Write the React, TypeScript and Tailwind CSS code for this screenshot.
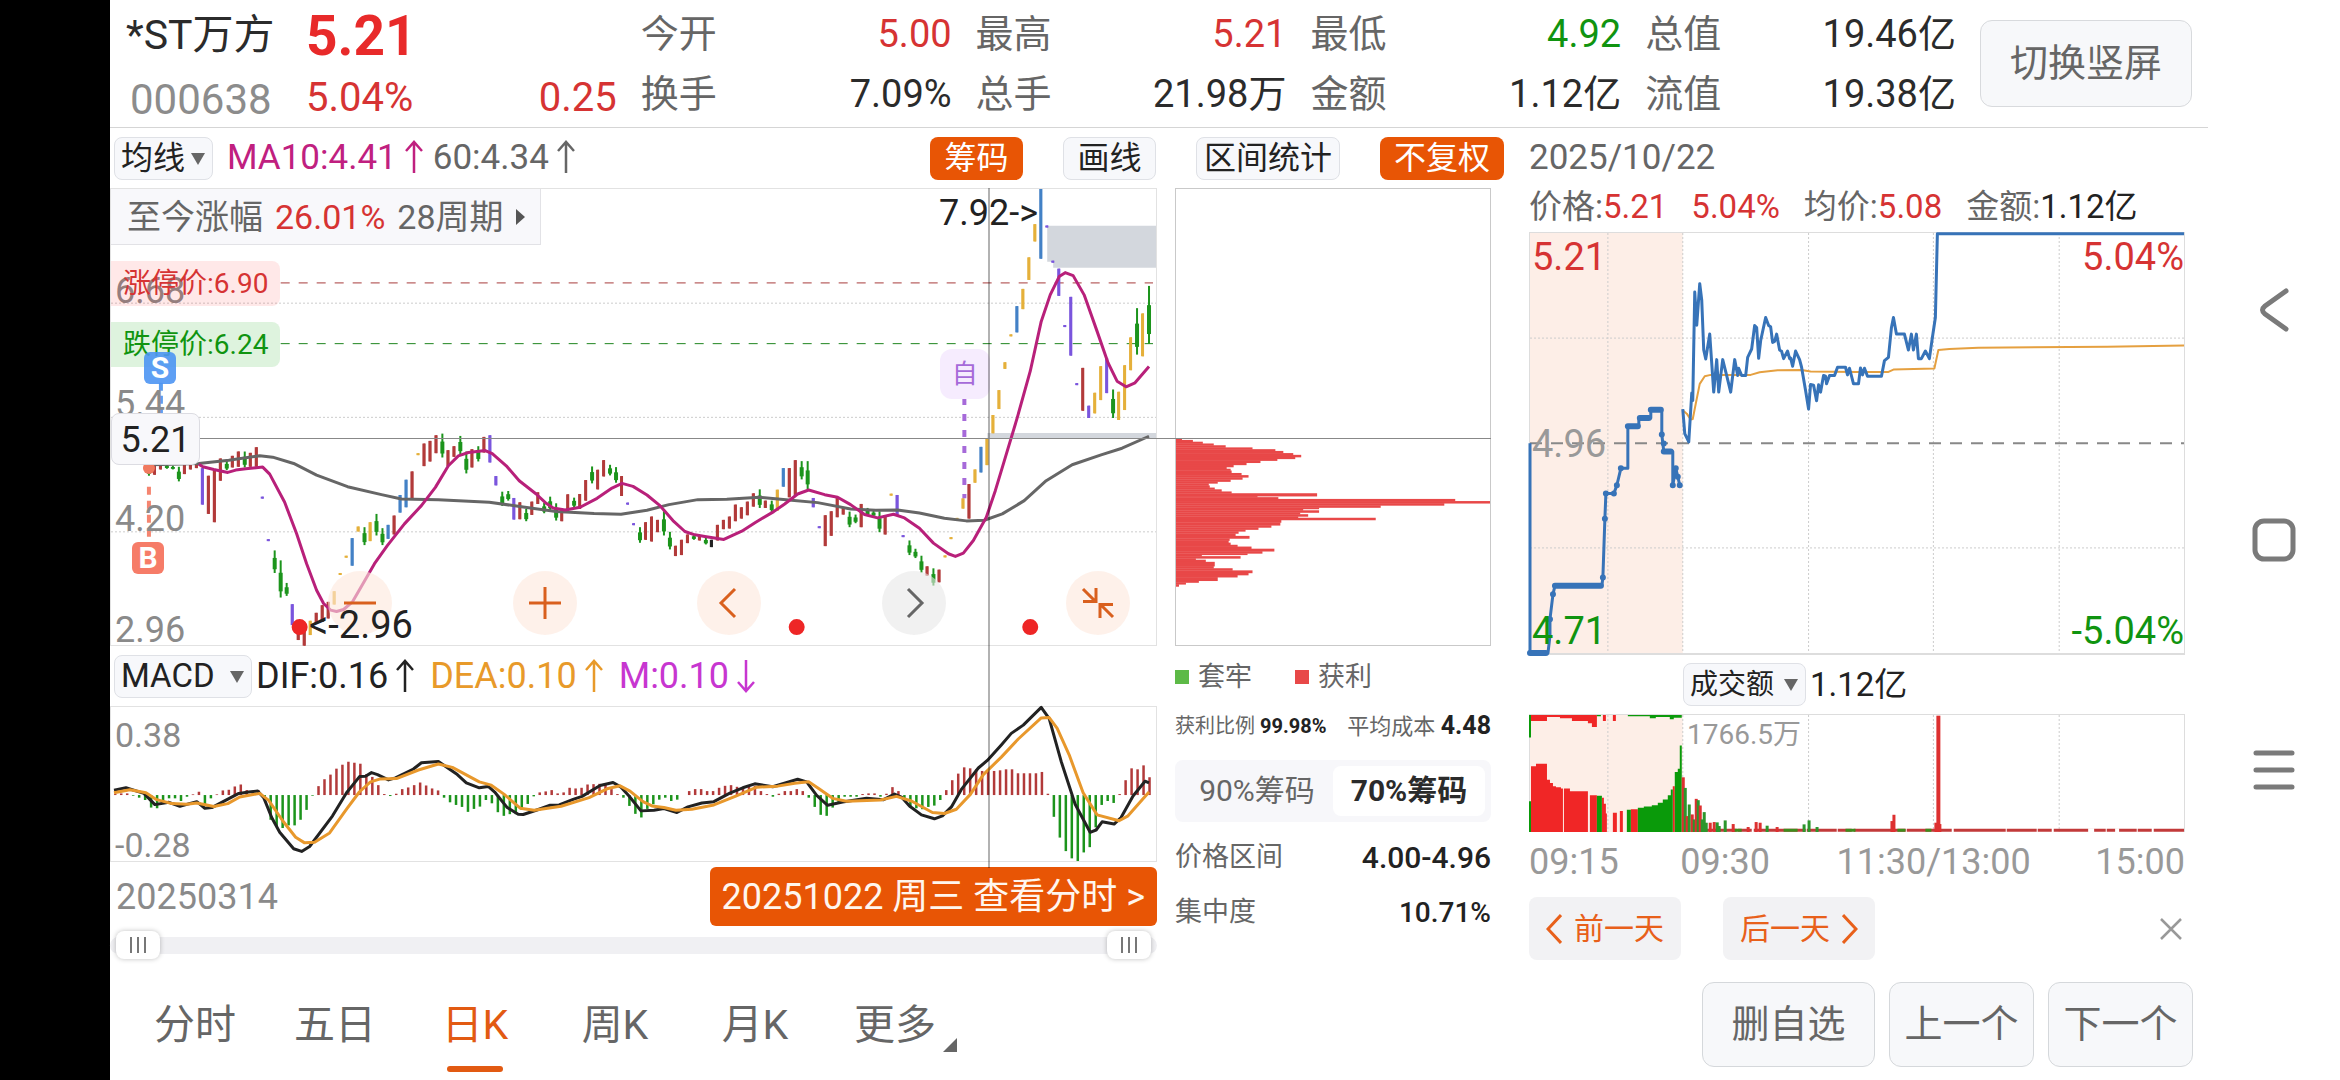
import type { ReactNode } from 'react'

// candle: [high, low, colour], one every 6px
type Candle = [number, number, string]

const R = '#b23a3a'
const G = '#1c941c'
const P = '#7a55dd'
const Y = '#e5b03a'
const B = '#4381c6'
const K = '#222222'

const candles: Candle[] = [
    [850, 885, G], [850, 882, R], [848, 866, R], [850, 864, G], [855, 866, G], [858, 902, G], [850, 880, R], [850, 866, R],
    [848, 862, R], [862, 972, P], [885, 1000, R], [870, 1025, R], [833, 900, R], [840, 868, G], [825, 860, R], [812, 858, R],
    [812, 860, G], [816, 858, R], [799, 858, R], [948, 954, P], [1076, 1082, P], [1110, 1178, G], [1140, 1252, G], [1208, 1247, G],
    [1272, 1335, P], [1320, 1380, R], [1340, 1397, R], [1322, 1365, Y], [1298, 1330, R], [1275, 1325, R], [1265, 1315, R], [1233, 1273, Y],
    [1178, 1184, Y], [1126, 1132, Y], [1073, 1156, B], [1038, 1053, Y], [1040, 1094, G], [1025, 1082, Y], [1000, 1065, G], [1043, 1094, G],
    [1033, 1075, B], [1005, 1062, R], [943, 996, B], [897, 980, B], [872, 954, R], [817, 823, Y], [788, 856, R], [780, 842, R],
    [763, 817, R], [758, 830, G], [808, 856, R], [796, 828, R], [765, 820, G], [812, 878, G], [805, 860, R], [796, 842, G],
    [768, 815, R], [763, 845, P], [886, 914, P], [933, 976, G], [931, 960, G], [952, 1017, P], [965, 1016, R], [985, 1022, G],
    [963, 1003, R], [935, 970, R], [967, 998, G], [948, 990, G], [968, 1020, G], [985, 1022, R], [941, 990, R], [951, 980, G],
    [940, 985, R], [898, 960, R], [857, 908, G], [867, 926, R], [838, 887, R], [852, 884, G], [859, 906, G], [886, 946, R],
    [966, 972, P], [1028, 1034, P], [1040, 1087, G], [1025, 1078, R], [1008, 1083, R], [1018, 1055, R], [992, 1065, G], [1054, 1107, G],
    [1096, 1127, R], [1078, 1124, R], [1062, 1088, R], [1062, 1078, G], [1065, 1080, R], [1072, 1092, G], [1078, 1100, K], [1033, 1080, R],
    [1018, 1046, R], [1008, 1044, R], [972, 1022, R], [980, 1014, R], [963, 1004, R], [938, 978, R], [926, 982, G], [960, 982, R],
    [960, 994, G], [927, 990, Y], [862, 918, B], [862, 950, R], [838, 945, R], [841, 896, G], [841, 925, G], [952, 980, P],
    [1037, 1043, P], [1004, 1097, R], [992, 1066, R], [952, 1010, R], [980, 1002, R], [993, 1040, G], [1002, 1028, G], [970, 1040, R],
    [982, 1005, G], [990, 1008, G], [992, 1055, G], [1008, 1062, R], [939, 945, Y], [943, 1003, P], [1064, 1070, P], [1080, 1124, G],
    [1105, 1133, G], [1126, 1177, G], [1158, 1186, R], [1164, 1216, G], [1168, 1206, R], [1125, 1131, Y], [1070, 1076, Y], [1012, 1018, Y],
    [953, 984, Y], [910, 1014, R], [866, 906, Y], [798, 875, B], [773, 853, Y], [702, 757, Y], [627, 684, Y], [543, 563, Y],
    [459, 465, Y], [374, 453, B], [322, 383, Y], [227, 295, Y], [127, 179, Y], [21, 231, B], [131, 137, P], [237, 243, P],
    [261, 343, P], [431, 437, P], [346, 523, P], [606, 612, P], [560, 689, R], [674, 711, P], [635, 697, Y], [555, 657, Y],
    [530, 636, P], [625, 711, G], [632, 717, Y], [552, 687, Y], [468, 567, Y], [380, 520, G], [396, 525, Y], [313, 487, G],
]

const ma10 =
    '88,850 92,858 103,866 117,875 125,868 135,864 152,859 159,880 174,965 186,1060 196,1150 206,1230 213,1270 220,1290 226,1294 233,1288 242,1265 264,1150 277,1095 294,1030 311,975 325,920 338,855 348,825 358,815 375,809 382,818 396,855 409,900 426,940 436,968 443,982 455,988 470,980 487,953 502,922 512,908 523,917 537,943 550,975 563,1020 575,1053 585,1063 595,1068 614,1077 632,1052 646,1025 664,993 675,970 688,940 699,928 715,942 728,950 741,972 755,1002 768,1012 784,1001 795,1012 810,1043 824,1088 839,1120 846,1128 854,1118 864,1080 877,1010 886,930 895,840 908,710 921,570 932,420 941,340 950,285 956,273 964,282 975,340 988,450 999,545 1008,600 1017,617 1026,605 1040,556'

const ma60 =
    '40,852 88,848 118,838 149,825 162,829 183,848 206,883 237,918 271,942 291,955 328,957 379,965 413,979 446,993 484,999 511,1001 519,997 537,989 559,972 588,957 617,956 650,950 679,958 708,966 741,985 766,989 788,988 810,997 835,1013 857,1021 875,1019 893,1000 915,960 937,900 963,852 992,822 1013,802 1040,766'

const macdBars = [
    3, 5, 5, -2, -8, -15, -38, -40, -25, -10, -10, -18, -5, 2, 10, -32, -10, 2, 14, 16, 26, 32, 15, 13, 14, -15, -75, -95, -100, -92,
    -92, -75, -45, -2, 27, 48, 62, 80, 92, 101, 98, 95, 63, 55, 30, 3, -3, 4, 18, 23, 30, 38, 29, 20, 14, -8, -22, -30, -36, -51,
    -42, -35, -15, -25, -52, -63, -58, -58, -45, -27, -4, 8, 11, 15, 5, 8, 22, 20, 22, 32, 33, 34, 34, 18, 3, -8, -33, -57, -68, -42,
    -28, -14, -8, -18, -14, 0, 12, 18, 18, 12, 12, 22, 28, 30, 25, 22, 25, 28, 12, 3, -5, 4, 12, 12, 18, 12, -8, -36, -60, -63,
    -38, -22, -5, -5, -5, 3, 5, 5, -5, 4, 24, 12, -15, -38, -40, -43, -36, -32, -15, 15, 45, 65, 84, 81, 78, 73, 73, 73, 75, 78,
    78, 66, 66, 66, 66, 70, 4, -66, -129, -170, -192, -200, -174, -158, -98, -30, -18, -24, 3, 45, 81, 78, 90, 54,
]

const dif =
    '3,447 15,440 33,457 44,491 58,484 69,496 86,482 94,502 101,500 128,457 138,453 147,450 153,470 161,530 169,575 183,625 191,633 199,618 222,525 236,455 249,406 255,405 261,394 267,400 278,416 285,410 303,383 311,364 328,360 347,400 356,425 369,440 378,436 385,455 397,500 408,520 413,521 426,508 440,493 449,492 463,475 472,466 490,433 503,424 511,438 519,465 531,510 544,508 554,503 567,515 578,498 592,486 604,482 620,456 633,440 645,428 663,437 688,414 697,422 707,463 718,493 733,483 757,472 774,476 785,459 792,468 800,495 812,522 825,534 833,525 842,498 852,445 869,380 878,357 892,310 902,275 914,250 932,196 940,230 952,360 966,490 981,575 987,568 993,543 1005,550 1012,530 1024,465 1036,420 1040,425'

const dea =
    '3,455 19,446 35,455 45,475 61,488 76,490 86,486 103,497 117,488 129,468 149,457 158,478 172,540 185,590 194,607 204,605 219,577 236,505 249,452 260,422 270,413 286,412 308,386 328,368 342,378 369,422 381,432 394,460 410,502 424,508 451,496 479,470 497,443 510,434 520,450 533,482 542,495 554,500 566,508 582,505 604,492 626,465 647,438 668,435 685,426 699,422 709,442 723,472 737,481 771,477 787,466 802,480 823,515 835,518 847,505 861,460 874,400 892,347 909,292 932,228 940,227 948,260 960,340 974,455 988,522 1010,540 1019,525 1040,453'

// chip rows: [top, width]
const chips: [number, number][] = [
    [106, 6], [110, 17], [115, 27], [120, 38], [125, 50], [131, 77], [136, 100], [141, 108], [147, 118], [152, 126], [158, 120], [163, 102],
    [168, 85], [174, 71], [180, 58], [186, 51], [191, 55], [196, 56], [203, 66], [209, 73], [215, 67], [221, 55], [227, 42], [232, 33],
    [238, 34], [244, 39], [249, 46], [255, 56], [260, 142], [268, 82], [271, 103], [276, 281], [282, 316], [288, 270], [294, 206], [300, 144],
    [304, 128], [308, 144], [314, 125], [319, 133], [325, 123], [329, 201], [335, 106], [342, 105], [350, 96], [356, 83], [362, 70], [367, 63],
    [373, 60], [380, 74], [387, 54], [393, 53], [399, 55], [405, 62], [410, 76], [416, 99], [423, 87], [429, 72], [433, 26], [437, 65],
    [443, 20], [447, 30], [453, 39], [465, 38], [471, 57], [477, 77], [484, 73], [490, 62], [496, 42], [506, 23], [511, 10], [516, 3], [522, 0],
]

const auction =
    '0,669 0,1302 18,1302 20,1250 20,1200 23,1125 25,1099 72,1099 73,1074 75,897 76,821 84,821 87,796 91,745 98,745 98,618 109,618 109,593 121,593 121,568 132,568 132,643 134,694 143,694 143,796 146,745 148,770 150,796'

const price =
    '153,566 155,640 159,665 162,518 163,540 165,213 167,313 170,188 172,238 174,388 176,415 180,340 184,515 187,417 189,515 193,417 197,465 201,515 205,417 208,465 209,443 212,465 216,465 218,410 222,385 225,314 227,320 229,413 231,360 236,290 239,314 241,318 243,365 245,362 247,340 250,388 252,392 254,414 258,391 260,414 261,412 263,437 266,391 270,417 272,440 276,510 279,566 281,492 284,494 287,541 289,493 291,515 294,465 296,467 297,490 300,465 305,465 308,440 316,440 318,463 320,443 324,490 329,490 331,442 333,463 335,443 338,467 352,467 355,420 359,410 362,320 364,290 367,340 375,340 379,388 382,340 384,388 387,340 389,414 392,414 396,391 400,414 403,350 406,290 408,37 655,37'

const average =
    '153,570 157,580 161,598 163,596 166,550 170,490 175,467 181,463 221,463 230,455 248,449 272,448 281,453 328,454 359,454 364,447 405,444 409,388 420,385 449,381 578,378 655,374'

// volume bars after the open: [x, top, red?]
const volumes: [number, number, boolean][] = [
    [153, 378, true], [155, 410, false], [157, 495, true], [159, 460, false], [162, 490, true], [164, 505, false], [166, 443, true],
    [168, 447, false], [170, 463, true], [172, 505, false], [174, 483, false], [176, 515, false], [180, 515, true], [184, 513, true],
    [187, 514, false], [189, 525, false], [195, 508, false], [203, 519, true], [218, 528, true], [226, 513, true], [230, 515, true],
    [237, 524, false], [247, 528, true], [274, 520, false], [279, 508, false], [287, 528, false], [362, 510, true], [364, 491, true],
    [406, 515, true], [408, 192, true], [410, 519, true],
]

const quotes = [
    { label: '今开', value: '5.00', color: 'text-[#d63333]', label2: '换手', value2: '7.09%' },
    { label: '最高', value: '5.21', color: 'text-[#d63333]', label2: '总手', value2: '21.98万' },
    { label: '最低', value: '4.92', color: 'text-[#109410]', label2: '金额', value2: '1.12亿' },
    { label: '总值', value: '19.46亿', color: 'text-[#2b2b2b]', label2: '流值', value2: '19.38亿' },
]

const tabs = ['分时', '五日', '日K', '周K', '月K']

function Plot({ box, children }: { box: string; children: ReactNode }) {
    return (
        <svg viewBox={box} preserveAspectRatio="none" className="block w-full h-full overflow-visible" aria-hidden="true">
            {children}
        </svg>
    )
}

function Line({ points, color, width = 2 }: { points: string; color: string; width?: number }) {
    return <polyline points={points} fill="none" stroke={color} strokeWidth={width} strokeLinejoin="round" vectorEffect="non-scaling-stroke" />
}

function Grid({ d }: { d: string }) {
    return <path d={d} fill="none" stroke="#cccccc" strokeWidth={1} strokeDasharray="2 2" vectorEffect="non-scaling-stroke" />
}

function Arrow({ down }: { down?: boolean }) {
    return (
        <svg viewBox="0 0 18 34" className="inline-block w-[18px] h-[34px] ml-2 align-[-5px]" fill="none" stroke="currentColor" strokeWidth="2.500" role="img" aria-label={down ? '↓' : '↑'}>
            {down ? <path d="M9 1v31M1 23l8 9 8-9" /> : <path d="M9 33V2M1 11l8-9 8 9" />}
        </svg>
    )
}

function Picker({ label, options, className }: { label: string; options: string[]; className: string }) {
    return (
        <div className="relative">
            <select aria-label={label} className={`${className} block h-[43px] appearance-none rounded-lg border border-[#dfe1e6] bg-[#f7f8fb] pl-1.5 leading-[40px] text-[#222]`}>
                {options.map((o) => <option key={o}>{o}</option>)}
            </select>
            <svg viewBox="0 0 14 12" className="absolute right-2 top-4 w-3.5 h-3 pointer-events-none"><path d="M0 0h14l-7 12z" fill="#666" /></svg>
        </div>
    )
}

function RoundButton({ label, children, gray }: { label: string; children: ReactNode; gray?: boolean }) {
    return (
        <button aria-label={label} className={`flex items-center justify-center w-16 h-16 rounded-full ${gray ? 'bg-[#e8e8e8]/60 text-[#666]' : 'bg-[#fee8dc]/60 text-[#d9601e]'}`}>
            <svg viewBox="0 0 40 40" className="w-10 h-10" fill="none" stroke="currentColor" strokeWidth="3">{children}</svg>
        </button>
    )
}

function Header() {
    return (
        <header className="flex items-center h-32 pl-4 pr-4 border-b border-[#d5d5d5]">
            <div className="w-[180px] shrink-0">
                <p className="h-[60px] text-[41px] leading-[62px] text-[#2b2b2b] whitespace-nowrap">*ST万方</p>
                <p className="h-[60px] pl-1 text-[42px] leading-[72px] text-[#8c8c8c]">000638</p>
            </div>
            <div className="grid flex-1 grid-cols-5 gap-6">
                <div>
                    <p className="h-[60px] text-[55px] leading-[64px] font-bold text-[#e82a2a]">5.21</p>
                    <p className="flex justify-between h-[60px] text-[40px] leading-[68px] text-[#d63333]"><span>5.04%</span><span>0.25</span></p>
                </div>
                {quotes.map((q) => (
                    <dl key={q.label} className="grid grid-cols-[auto_1fr] text-[38px] leading-[60px]">
                        <dt className="text-[#666]">{q.label}</dt>
                        <dd className={`text-right ${q.color}`}>{q.value}</dd>
                        <dt className="text-[#666]">{q.label2}</dt>
                        <dd className="text-right text-[#2b2b2b]">{q.value2}</dd>
                    </dl>
                ))}
            </div>
            <button className="ml-6 w-[212px] h-[87px] rounded-xl border border-[#d8dadd] bg-[#f7f8fa] text-[38px] text-[#666]">切换竖屏</button>
        </header>
    )
}

function Toolbar() {
    return (
        <div className="flex items-center h-[60px] pl-1 text-[32px]">
            <Picker label="均线" options={['均线']} className="w-[99px]" />
            <p className="ml-3.5 text-[35px] whitespace-nowrap text-[#c0207f]">MA10:4.41<Arrow /></p>
            <p className="ml-2.5 text-[35px] whitespace-nowrap text-[#666]">60:4.34<Arrow /></p>
            <div className="flex gap-10 ml-auto">
                <button className="w-[93px] h-[43px] rounded-lg bg-[#e85505] text-white leading-none">筹码</button>
                <button className="w-[93px] h-[43px] rounded-lg border border-[#dfe1e6] bg-[#f7f8fb] text-[#222] leading-none">画线</button>
                <button className="w-[144px] h-[43px] rounded-lg border border-[#dfe1e6] bg-[#f7f8fb] text-[#222] leading-none">区间统计</button>
                <button className="w-[124px] h-[43px] rounded-lg bg-[#e85505] text-white leading-none">不复权</button>
            </div>
        </div>
    )
}

function CandleChart() {
    return (
        <div className="relative h-[458px] border border-[#e2e2e2]">
            <div className="absolute left-1 top-[82px] text-[36px] leading-10 text-[#8a8a8a]">6.68</div>
            <div className="absolute left-1 top-[195px] text-[36px] leading-10 text-[#8a8a8a]">5.44</div>
            <div className="absolute left-1 top-[310px] text-[36px] leading-10 text-[#8a8a8a]">4.20</div>
            <div className="absolute left-1 top-[421px] text-[36px] leading-10 text-[#8a8a8a]">2.96</div>
            <Plot box="0 21 1047 1374">
                <Grid d="M0 365H1047M0 709H1047M0 1054H1047" />
                <path d="M938 132H1047V258H944V240H938zM878 756H1047V772H878z" fill="#d3d7dd" />
                <path d="M170 304H1044" stroke="#a83c3c" strokeWidth={1} strokeDasharray="9 9" vectorEffect="non-scaling-stroke" />
                <path d="M170 487H1044" stroke="#1f851f" strokeWidth={1} strokeDasharray="9 9" vectorEffect="non-scaling-stroke" />
                {candles.map(([hi, lo, color], i) => (
                    <g key={i} fill={color}>
                        <rect x={37 + i * 6} y={hi} width={2} height={lo - hi} />
                        <rect x={36 + i * 6} y={color === G ? hi + (lo - hi) / 3 : hi} width={color === G ? 4 : 3} height={color === G ? (lo - hi) / 2 : lo - hi} />
                    </g>
                ))}
                <Line points={ma60} color="#666666" width={3} />
                <Line points={ma10} color="#b8207a" width={3} />
                <path d="M50 605V697" stroke="#5a9df0" strokeWidth={4} strokeDasharray="8 5" vectorEffect="non-scaling-stroke" />
                <path d="M38 918V1080" stroke="#f58570" strokeWidth={4} strokeDasharray="8 6" vectorEffect="non-scaling-stroke" />
                <path d="M38 862h0" stroke="#f07a60" strokeWidth={12} strokeLinecap="round" vectorEffect="non-scaling-stroke" />
                <path d="M855 651V953" stroke="#a66ad9" strokeWidth={4} strokeDasharray="7 9" vectorEffect="non-scaling-stroke" />
                <path d="M189 1341h0M687 1341h0M921 1341h0" stroke="#ee2626" strokeWidth={16} strokeLinecap="round" vectorEffect="non-scaling-stroke" />
            </Plot>

            <button className="absolute left-0 top-0 flex items-center gap-3 w-[430px] h-14 pl-4 border-r border-b border-[#e2e2e6] bg-[#f8f8fb] text-[34px] leading-none whitespace-nowrap text-[#666]">
                <span>至今涨幅</span>
                <span className="text-[#d63333]">26.01%</span>
                <span>28周期</span>
                <svg viewBox="0 0 9 16" className="w-[9px] h-4"><path d="M0 0l9 8-9 8z" fill="#555" /></svg>
            </button>
            <div className="absolute left-0 top-[72px] h-[45px] px-3 rounded-r-lg bg-[#ff2020]/10 text-[28px] leading-[45px] text-[#d63333]">涨停价:6.90</div>
            <div className="absolute left-0 top-[133px] h-[45px] px-3 rounded-r-lg bg-[#20b020]/15 text-[28px] leading-[45px] text-[#109410]">跌停价:6.24</div>
            <div className="absolute left-[33px] top-[163px] w-8 h-8 rounded-md bg-[#4c95f3]/90 text-center text-[30px] leading-8 font-bold text-white">S</div>
            <div className="absolute left-[21px] top-[353px] w-8 h-8 rounded-md bg-[#f67c68] text-center text-[30px] leading-8 font-bold text-white">B</div>
            <div className="absolute left-0 top-[224px] z-10 w-[89px] h-[52px] rounded-lg border border-[#dcdce2] bg-[#f8f8fb] text-center text-[36px] leading-[52px] text-[#222]">5.21</div>
            <div className="absolute left-[79.300%] top-[160px] w-[50px] h-[50px] rounded-xl bg-[#f6ecfe] text-center text-[26px] leading-[50px] text-[#a66ad9]">自</div>
            <div className="absolute right-[118px] top-1 text-[36px] leading-10 text-[#222]">7.92-&gt;</div>

            <div className="absolute left-[217px] right-[26px] bottom-2.5 flex justify-between">
                <RoundButton label="缩小"><path d="M4 20h32" /></RoundButton>
                <RoundButton label="放大"><path d="M4 20h32M20 4v32" /></RoundButton>
                <RoundButton label="左移"><path d="M26 6L12 20l14 14" /></RoundButton>
                <RoundButton label="右移" gray><path d="M14 6l14 14-14 14" /></RoundButton>
                <RoundButton label="收起"><path d="M5 6l12 12M5 18.500h13V5M35 34L23 22M35 21.500H22V35" /></RoundButton>
            </div>
            <div className="absolute left-[198px] top-[416px] text-[38px] leading-10 text-[#222] pointer-events-none">&lt;-2.96</div>
        </div>
    )
}

function MacdChart() {
    return (
        <>
            <div className="flex items-center h-[60px] pl-1 text-[36px] whitespace-nowrap">
                <Picker label="指标" options={['MACD']} className="w-[138px] text-[33px]" />
                <span className="ml-1 text-[#222]">DIF:0.16<Arrow /></span>
                <span className="ml-4 text-[#e89a2a]">DEA:0.10<Arrow /></span>
                <span className="ml-4 text-[#c736d0]">M:0.10<Arrow down /></span>
            </div>
            <div className="relative h-[156px] border border-[#e2e2e2]">
                <Plot box="0 195 1047 467">
                    {macdBars.map((v, i) => (
                        <rect key={i} x={3 + i * 5.99} y={v > 0 ? 462 - v : 462} width={2.5} height={Math.abs(v)} fill={v > 0 ? '#b23a3a' : '#1c941c'} />
                    ))}
                    <Line points={dif} color="#222222" width={3} />
                    <Line points={dea} color="#e8982c" width={3} />
                </Plot>
                <div className="absolute left-1 top-2 text-[34px] leading-10 text-[#8a8a8a]">0.38</div>
                <div className="absolute left-1 bottom-0 text-[34px] leading-8 text-[#8a8a8a]">-0.28</div>
            </div>
        </>
    )
}

const thumb =
    'absolute inset-x-1.5 inset-y-0 h-7 appearance-none bg-transparent pointer-events-none [&::-webkit-slider-thumb]:appearance-none [&::-webkit-slider-thumb]:pointer-events-auto [&::-webkit-slider-thumb]:w-11 [&::-webkit-slider-thumb]:h-7 [&::-webkit-slider-thumb]:rounded-lg [&::-webkit-slider-thumb]:shadow-[0_0_5px_rgba(0,0,0,0.25)] [&::-webkit-slider-thumb]:bg-white [&::-webkit-slider-thumb]:bg-no-repeat [&::-webkit-slider-thumb]:bg-center [&::-webkit-slider-thumb]:bg-[length:100%_16px] [&::-webkit-slider-thumb]:bg-[linear-gradient(90deg,transparent_14px,#777_14px,#777_16px,transparent_16px,transparent_21px,#777_21px,#777_23px,transparent_23px,transparent_28px,#777_28px,#777_30px,transparent_30px)]'

function DateRow() {
    return (
        <>
            <div className="flex items-center justify-between h-[69px] pl-1.5">
                <span className="text-[36px] text-[#8a8a8a]">20250314</span>
                <button className="h-[59px] px-3 rounded-md bg-[#e85505] text-[36px] leading-none text-[#fff6ee] whitespace-nowrap">20251022 周三 查看分时 &gt;</button>
            </div>
            <div className="relative h-7">
                <div className="absolute inset-x-0 top-1.5 h-[17px] rounded-full bg-[#f0f0f3]"></div>
                <input type="range" aria-label="开始" defaultValue={0} className={thumb} />
                <input type="range" aria-label="结束" defaultValue={100} className={thumb} />
            </div>
        </>
    )
}

function ChipPanel() {
    return (
        <div className="flex-[316] min-w-0 text-[#666]">
            <div className="h-[458px] border border-[#c9c9c9]">
                <Plot box="0 -596 316 1283">
                    {chips.slice(0, -1).map(([y, w], i) => (
                        <rect key={y} x={0} y={y} width={w} height={chips[i + 1][0] - y + 1} fill="#e84848" />
                    ))}
                </Plot>
            </div>
            <div className="flex items-center gap-[43px] h-[62px] text-[27px]">
                <span className="flex items-center gap-[9px]"><i className="w-3.5 h-3.5 bg-[#5dba47]"></i>套牢</span>
                <span className="flex items-center gap-[9px]"><i className="w-3.5 h-3.5 bg-[#e84848]"></i>获利</span>
            </div>
            <div className="flex items-center justify-between h-9 whitespace-nowrap">
                <span className="text-[20px]">获利比例 <b className="text-[20px] font-bold text-[#222]">99.98%</b></span>
                <span className="text-[22px]">平均成本 <b className="text-[25px] font-bold text-[#222]">4.48</b></span>
            </div>
            <div className="flex h-[62px] mt-4 p-1.5 rounded-lg bg-[#f7f7fa] text-[30px] leading-none">
                <button aria-pressed="false" className="flex-1">90%筹码</button>
                <button aria-pressed="true" className="flex-1 rounded-lg bg-white font-bold text-[#2b2b2b]">70%筹码</button>
            </div>
            <div className="flex items-center justify-between h-[55px] mt-2 text-[30px]"><span className="text-[27px]">价格区间</span><b className="font-medium text-[#222]">4.00-4.96</b></div>
            <div className="flex items-center justify-between h-[55px] text-[28px]"><span className="text-[27px]">集中度</span><b className="font-medium text-[#222]">10.71%</b></div>
        </div>
    )
}

function Intraday() {
    return (
        <section className="flex-[656] min-w-0 ml-[25px] mr-[23px] text-[#666]">
            <p className="h-[54px] text-[35px] leading-[60px]">2025/10/22</p>
            <div className="flex gap-6 h-[50px] text-[33px] leading-[50px] whitespace-nowrap">
                <span>价格:<span className="text-[#d63333]">5.21</span></span>
                <span className="text-[#d63333]">5.04%</span>
                <span>均价:<span className="text-[#d63333]">5.08</span></span>
                <span>金额:<span className="text-[#222]">1.12亿</span></span>
            </div>
            <div className="relative h-[423px] border border-b-2 border-[#dddddd] text-[38px] leading-10">
                <Plot box="0 35 655 1267">
                    <rect x={0} y={35} width={153} height={1267} fill="#fdeee7" />
                    <Grid d="M78 35V1302M153 35V1302M279 35V1302M404 35V1302M530 35V1302M0 352H655M0 985H655" />
                    <path d="M0 669H655" stroke="#888" strokeWidth={2} strokeDasharray="12 9" vectorEffect="non-scaling-stroke" />
                    <Line points={average} color="#e5a040" />
                    <Line points={price} color="#3773b8" width={3} />
                    <Line points={auction} color="#3773b8" width={3} />
                    <path
                        d="M0 1302H16M25 1099H71M98 618H108M110 593H119M121 568H131M134 694H141M132 643h0M134 670h0M20 1200h0M23 1125h0M73 1074h0M75 897h0M76 821h0M84 821h0M87 796h0M91 745h0M143 796h0M146 745h0M148 770h0M150 796h0"
                        stroke="#3773b8" strokeWidth={6} strokeLinecap="round" vectorEffect="non-scaling-stroke" fill="none"
                    />
                </Plot>
                <span className="absolute left-0.5 top-1 text-[#d63333]">5.21</span>
                <span className="absolute right-0 top-1 text-[#d63333]">5.04%</span>
                <span className="absolute left-0.5 top-[191px] text-[#999]">4.96</span>
                <span className="absolute left-0.5 bottom-0.5 text-[#109410]">4.71</span>
                <span className="absolute right-0 bottom-0.5 text-[#109410]">-5.04%</span>
            </div>
            <div className="flex items-center gap-1 h-[59px] pl-[154px] text-[33px] text-[#222]">
                <Picker label="副图" options={['成交额']} className="w-[123px] text-[28px]" />
                <span>1.12亿</span>
            </div>
            <div className="relative h-[118px] border border-b-0 border-[#dddddd]">
                <Plot box="0 190 655 353">
                    <rect x={0} y={190} width={153} height={353} fill="#fdeee7" />
                    <Grid d="M78 190V543M153 190V543M279 190V543M404 190V543M530 190V543" />
                    <path d="M1 543V345H6V337H17V385H20V395H23V405H26V408H31V412H33V543zM34 543V412H40V420H58V543zM60 543V432H67V543zM72 543V440H74V458H76V487H77V543zM83 543V485H87V543zM90 543V480H93V543zM101 543V474H108V543zM143 543V405H145V543zM1 190V208H17V196H30V200H42V208H58V215H62V226H67V190zM73 190V208H76V190zM83 190V208H86V190z" fill="#f02626" />
                    <path d="M-1 543V450H1V543zM-1 190V258H1V190zM67 543V434H72V543zM97 543V476H101V543zM108 543V470H114V466H122V462H128V455H133V445H138V432H141V415H143V543zM145 543V362H148V352H150V282H152V543zM67 190V194H71V190zM98 190V194H120V200H126V196H140V203H144V198H152V190z" fill="#0a9a0a" />
                    <path d="M177 538H655" stroke="#c23a3a" strokeWidth={3} strokeDasharray="30 1 14 2 52 1" vectorEffect="non-scaling-stroke" />
                    <path d="M204 538h8M254 538h14M316 538h10M368 538h8M396 538h6" stroke="#3d8c1c" strokeWidth={3} vectorEffect="non-scaling-stroke" />
                    {volumes.map(([x, y, red]) => (
                        <rect key={x} x={x - 1} y={y} width={x === 408 ? 4 : 3} height={543 - y} fill={red ? '#dd3030' : '#2c962c'} />
                    ))}
                    <path d="M559 538h6M586 538h4" stroke="#ffffff" strokeWidth={4} vectorEffect="non-scaling-stroke" />
                </Plot>
                <span className="absolute left-[157px] top-0 text-[28px] leading-10 text-[#999]">1766.5万</span>
            </div>
            <div className="grid grid-cols-[151fr_149fr_208fr_147fr] h-[58px] text-[36px] leading-[60px] text-[#999] whitespace-nowrap">
                <span>09:15</span>
                <span>09:30</span>
                <span className="text-center">11:30/13:00</span>
                <span className="text-right">15:00</span>
            </div>
            <div className="flex items-center mt-[7px] text-[30px] leading-none text-[#e8601a]">
                <button className="flex items-center justify-center gap-3 w-[152px] h-[63px] rounded-lg bg-[#f2f2f4]">
                    <svg viewBox="0 0 16 30" className="w-4 h-[30px]" fill="none" stroke="currentColor" strokeWidth="3"><path d="M15 1L2 15l13 14" /></svg>
                    前一天
                </button>
                <button className="flex items-center justify-center gap-3 w-[152px] h-[63px] ml-[42px] rounded-lg bg-[#f2f2f4]">
                    后一天
                    <svg viewBox="0 0 16 30" className="w-4 h-[30px]" fill="none" stroke="currentColor" strokeWidth="3"><path d="M1 1l13 14L1 29" /></svg>
                </button>
                <button aria-label="关闭" className="ml-auto mr-[3px] text-[#999]">
                    <svg viewBox="0 0 22 22" className="w-[22px] h-[22px]" fill="none" stroke="currentColor" strokeWidth="2.500"><path d="M1 1l20 20M21 1L1 21" /></svg>
                </button>
            </div>
        </section>
    )
}

function BottomBar() {
    return (
        <footer className="flex items-center justify-between h-[112px] pl-[15px] pr-[15px] text-[#666]">
            <nav className="flex text-[41px]">
                {tabs.map((t) => (
                    <button key={t} className={`relative w-[140px] h-[112px] pt-0.5 leading-none ${t === '日K' ? 'text-[#e25a12]' : ''}`}>
                        {t}
                        {t === '日K' && <i className="absolute left-[42px] bottom-2 w-14 h-1.5 rounded-full bg-[#e25a12]"></i>}
                    </button>
                ))}
                <button className="relative w-[140px] h-[112px] pt-0.5 leading-none">
                    更多
                    <svg viewBox="0 0 14 14" className="absolute right-2 bottom-7 w-3.5 h-3.5"><path d="M14 0v14H0z" fill="#666" /></svg>
                </button>
            </nav>
            <div className="flex gap-3.5 text-[38px] leading-none">
                <button className="w-[173px] h-[85px] rounded-xl border border-[#d5d8db] bg-[#f7f8fa]">删自选</button>
                <button className="w-[145px] h-[85px] rounded-xl border border-[#d5d8db] bg-[#f7f8fa]">上一个</button>
                <button className="w-[145px] h-[85px] rounded-xl border border-[#d5d8db] bg-[#f7f8fa]">下一个</button>
            </div>
        </footer>
    )
}

function SystemNav() {
    return (
        <nav className="flex flex-col items-center justify-center gap-[186px] w-[132px] shrink-0 text-[#7a7a7a]">
            <button aria-label="返回">
                <svg viewBox="0 0 44 44" className="w-11 h-11" fill="none" stroke="currentColor" strokeWidth="5" strokeLinecap="round" strokeLinejoin="round"><path d="M34 3L13 18q-5 4 0 8L34 41" /></svg>
            </button>
            <button aria-label="主页">
                <svg viewBox="0 0 44 44" className="w-11 h-11" fill="none" stroke="currentColor" strokeWidth="5"><rect x="3" y="3" width="38" height="38" rx="9" /></svg>
            </button>
            <button aria-label="菜单">
                <svg viewBox="0 0 44 44" className="w-11 h-11" fill="none" stroke="currentColor" strokeWidth="5" strokeLinecap="round"><path d="M4 5h36M4 22h36M4 39h36" /></svg>
            </button>
        </nav>
    )
}

export default function App() {
    return (
        <div className="flex min-h-screen bg-white font-[Roboto,'Liberation_Sans','Noto_Sans_CJK_SC',sans-serif]">
            <div className="w-[110px] shrink-0 bg-black"></div>
            <main className="flex flex-col flex-1 min-w-0">
                <Header />
                <div className="flex">
                    <section className="flex-[1394] min-w-0">
                        <Toolbar />
                        <div className="relative flex gap-[18px] mr-[13px]">
                            <div className="relative flex-[1047] min-w-0">
                                <CandleChart />
                                <MacdChart />
                                <DateRow />
                                <div className="absolute left-[83.900%] top-0 w-0.5 h-[680px] bg-black/30 pointer-events-none"></div>
                            </div>
                            <ChipPanel />
                            <div className="absolute left-[89px] right-0 top-[250px] h-px bg-[#888] pointer-events-none"></div>
                        </div>
                    </section>
                    <Intraday />
                </div>
                <div className="mt-auto">
                    <BottomBar />
                </div>
            </main>
            <SystemNav />
        </div>
    )
}
